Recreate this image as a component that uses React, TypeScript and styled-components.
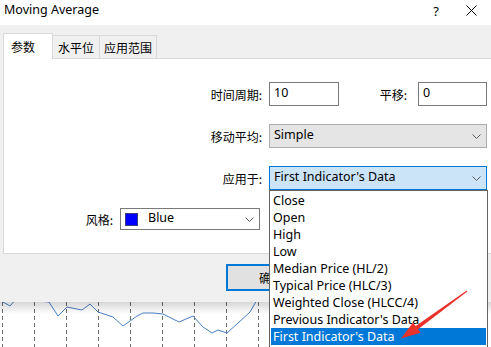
import React from "react";
import styled, { createGlobalStyle } from "styled-components";

const Global = createGlobalStyle`
  html, body { margin: 0; padding: 0; background: #ffffff; }
  * { box-sizing: border-box; }
`;

const LATIN = `"Noto Sans", "Noto Sans CJK SC", sans-serif`;
const CJK = `"Noto Sans CJK SC", "Noto Sans", sans-serif`;

const Screen = styled.div`
  position: relative;
  width: 491px;
  height: 347px;
  overflow: hidden;
  background: #ffffff;
  font-family: ${LATIN};
  color: #000;
`;

const Dialog = styled.div`
  display: flex;
  flex-direction: column;
  width: 500px;
  height: 302px;
`;

const TitleBar = styled.div`
  height: 25px;
  background: #ffffff;
  display: flex;
  align-items: center;
  padding-left: 4px;
`;

const Title = styled.div`
  flex: 1;
  font-size: 12.5px;
  line-height: 1;
  margin-top: -4px;
`;

const TitleButton = styled.div<{ $w: number }>`
  width: ${(p) => p.$w}px;
  display: flex;
  justify-content: center;
  align-items: center;
  font-size: 13px;
  margin-top: -4px;
`;

const Body = styled.div`
  flex: 1;
  background: #f0f0f0;
  display: flex;
  flex-direction: column;
  padding-top: 8px;
`;

const TabStrip = styled.div`
  display: flex;
  align-items: flex-end;
  height: 25px;
  padding-left: 3px;
`;

const Tab = styled.div<{ $active?: boolean; $w: number }>`
  position: relative;
  z-index: ${(p) => (p.$active ? 1 : 0)};
  width: ${(p) => p.$w}px;
  height: ${(p) => (p.$active ? 26 : 23)}px;
  margin-bottom: ${(p) => (p.$active ? -1 : 0)}px;
  margin-left: ${(p) => (p.$active ? 0 : -1)}px;
  background: ${(p) => (p.$active ? "#ffffff" : "#f0f0f0")};
  border: 1px solid #d9d9d9;
  border-bottom: none;
  font-family: ${CJK};
  font-size: 12px;
  display: flex;
  align-items: center;
  justify-content: ${(p) => (p.$active ? "flex-start" : "center")};
  padding-left: ${(p) => (p.$active ? 7 : 0)}px;
  padding-top: ${(p) => (p.$active ? 0 : 1)}px;
  &:first-child { margin-left: 0; }
`;

const Panel = styled.div`
  margin-left: 3px;
  height: 196px;
  background: #ffffff;
  border: 1px solid #d9d9d9;
  border-right: none;
  display: flex;
  flex-direction: column;
  gap: 18px;
  padding-top: 23px;
`;

const FormRow = styled.div<{ $indent: number; $h: number }>`
  display: flex;
  align-items: center;
  height: ${(p) => p.$h}px;
  padding-left: ${(p) => p.$indent}px;
`;

const Label = styled.div<{ $w: number; $gap: number }>`
  width: ${(p) => p.$w}px;
  margin-right: ${(p) => p.$gap}px;
  text-align: right;
  font-family: ${CJK};
  font-size: 12px;
  color: #000;
`;

const TextBox = styled.div<{ $w: number }>`
  width: ${(p) => p.$w}px;
  height: 24px;
  border: 1px solid #7a7a7a;
  background: #fff;
  font-size: 12.5px;
  display: flex;
  align-items: center;
  padding-left: 4px;
  padding-bottom: 3px;
`;

type Tone = "plain" | "gray" | "focus";

const Combo = styled.div<{ $w: number; $h: number; $tone: Tone }>`
  width: ${(p) => p.$w}px;
  height: ${(p) => p.$h}px;
  border: 1px solid
    ${(p) => (p.$tone === "focus" ? "#0078d7" : p.$tone === "gray" ? "#adadad" : "#7a7a7a")};
  background: ${(p) => (p.$tone === "focus" ? "#cce4f7" : p.$tone === "gray" ? "#e5e5e5" : "#ffffff")};
  display: flex;
  align-items: center;
  padding-left: 4px;
  padding-right: 5px;
  font-size: 12.5px;
`;

const ComboText = styled.div`
  flex: 1;
  padding-bottom: 3px;
  white-space: nowrap;
`;

const Swatch = styled.div`
  width: 13px;
  height: 13px;
  background: #0000ff;
  border: 1px solid #3a3a80;
  margin-right: 10px;
`;

const ButtonRow = styled.div`
  flex: 1;
  padding-top: 10px;
  padding-left: 226px;
`;

const Button = styled.div`
  width: 84px;
  height: 27px;
  border: 2px solid #0078d7;
  background: #e1e1e1;
  font-family: ${CJK};
  font-size: 12px;
  display: flex;
  align-items: center;
  justify-content: center;
  padding-left: 6px;
`;

const Chart = styled.div`
  position: relative;
  height: 45px;
  background: #ffffff;
  &::before {
    content: "";
    position: absolute;
    left: 0;
    right: 0;
    top: 0;
    height: 12px;
    background: linear-gradient(rgba(0, 0, 0, 0.16), rgba(0, 0, 0, 0));
  }
`;

const DropList = styled.div`
  position: absolute;
  left: 269px;
  top: 190px;
  width: 219px;
  height: 160px;
  background: #ffffff;
  border: 1px solid #646464;
  padding-top: 1px;
  padding-left: 1px;
  padding-right: 1px;
`;

const ListItem = styled.div<{ $selected?: boolean }>`
  height: 17px;
  line-height: 17px;
  padding-left: 2px;
  font-size: 12.5px;
  white-space: nowrap;
  background: ${(p) => (p.$selected ? "#0078d7" : "transparent")};
  color: ${(p) => (p.$selected ? "#ffffff" : "#000000")};
`;

const ArrowLayer = styled.svg`
  position: absolute;
  left: 0;
  top: 0;
  pointer-events: none;
`;

const Chevron = () => (
  <svg width="9" height="5" viewBox="0 0 9 5">
    <polyline points="0.5,0.5 4.5,4.5 8.5,0.5" fill="none" stroke="#606060" strokeWidth="1" />
  </svg>
);

const CloseIcon = () => (
  <svg width="11" height="11" viewBox="0 0 11 11">
    <path d="M0.5 0.5 L10.5 10.5 M10.5 0.5 L0.5 10.5" stroke="#000" strokeWidth="1" />
  </svg>
);

const items = [
  "Close",
  "Open",
  "High",
  "Low",
  "Median Price (HL/2)",
  "Typical Price (HLC/3)",
  "Weighted Close (HLCC/4)",
  "Previous Indicator's Data",
  "First Indicator's Data",
];

const linePts =
  "-4,-4 10,4 16,-3 49,0 58,14 67,5 82,8 90,2 98,10 113,15 123,24 137,14 143,11 153,11 163,12 179,20 193,14 203,25 212,31 218,28 227,31 238,21 250,10 258,-4";

export default function App() {
  const gridX = Array.from({ length: 16 }, (_, i) => 2.5 + i * 32);
  return (
    <Screen>
      <Global />
      <Dialog>
        <TitleBar>
          <Title>Moving Average</Title>
          <TitleButton $w={12}>?</TitleButton>
          <TitleButton $w={58}>
            <CloseIcon />
          </TitleButton>
        </TitleBar>
        <Body>
          <TabStrip>
            <Tab $active $w={50}>参数</Tab>
            <Tab $w={48}>水平位</Tab>
            <Tab $w={58}>应用范围</Tab>
          </TabStrip>
          <Panel>
            <FormRow $indent={178} $h={24}>
              <Label $w={80} $gap={7}>时间周期:</Label>
              <TextBox $w={70}>10</TextBox>
              <Label $w={68} $gap={11}>平移:</Label>
              <TextBox $w={69}>0</TextBox>
            </FormRow>
            <FormRow $indent={178} $h={24}>
              <Label $w={80} $gap={7}>移动平均:</Label>
              <Combo $w={218} $h={24} $tone="gray">
                <ComboText>Simple</ComboText>
                <Chevron />
              </Combo>
            </FormRow>
            <FormRow $indent={178} $h={24}>
              <Label $w={80} $gap={7}>应用于:</Label>
              <Combo $w={218} $h={24} $tone="focus">
                <ComboText>First Indicator's Data</ComboText>
                <Chevron />
              </Combo>
            </FormRow>
            <FormRow $indent={28} $h={22}>
              <Label $w={81} $gap={7}>风格:</Label>
              <Combo $w={140} $h={22} $tone="plain">
                <Swatch />
                <ComboText>Blue</ComboText>
                <Chevron />
              </Combo>
            </FormRow>
          </Panel>
          <ButtonRow>
            <Button>确定</Button>
          </ButtonRow>
        </Body>
      </Dialog>
      <Chart>
        <svg width="491" height="45" viewBox="0 0 491 45">
          {gridX.map((x) => (
            <line key={x} x1={x} y1={0} x2={x} y2={45} stroke="#6e6e6e" strokeWidth="1" strokeDasharray="4 3" />
          ))}
          <polyline points={linePts} fill="none" stroke="#4b7fc4" strokeWidth="1" />
        </svg>
      </Chart>
      <DropList>
        {items.map((t, i) => (
          <ListItem key={t} $selected={i === items.length - 1}>
            {t}
          </ListItem>
        ))}
      </DropList>
      <ArrowLayer width="491" height="347" viewBox="0 0 491 347">
        <polygon
          points="467.3,291.4 418.1,329.2 420.6,332.8 401,338.5 413,322.4 415.7,326 466.7,290.6"
          fill="#e8322b"
        />
      </ArrowLayer>
    </Screen>
  );
}
